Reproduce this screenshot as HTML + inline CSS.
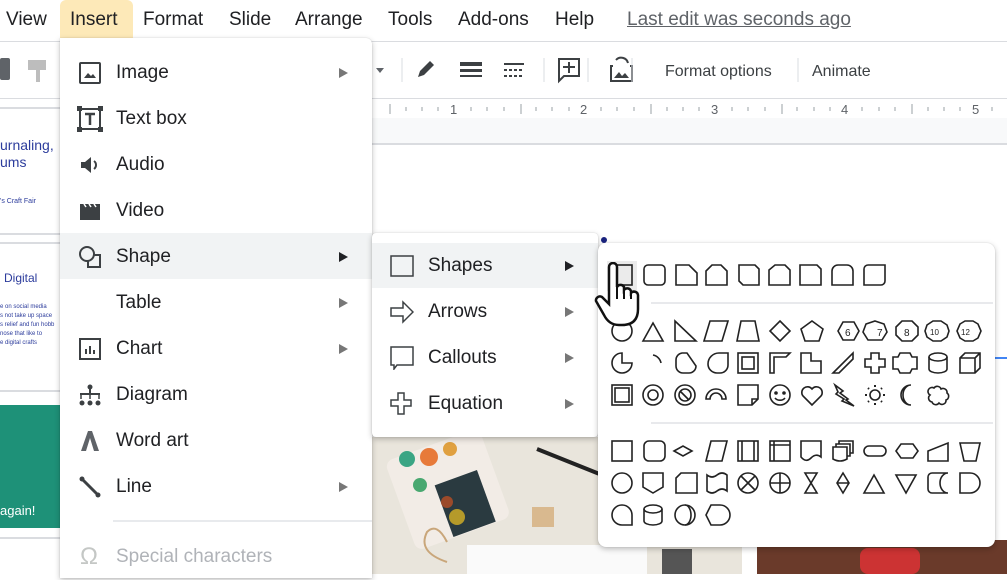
<!DOCTYPE html>
<html><head><meta charset="utf-8"><style>
*{margin:0;padding:0;box-sizing:border-box}
body{width:1007px;height:574px;overflow:hidden;background:#fff;font-family:"Liberation Sans",Arial,sans-serif;color:#202124;position:relative}
.abs{position:absolute}
.mb{top:0;height:40px;font-size:19px;line-height:40px;white-space:nowrap}
.menu{background:#fff;box-shadow:0 2px 6px rgba(0,0,0,.25),0 0 1px rgba(0,0,0,.2)}
.it{position:absolute;left:0;right:0;height:46px;font-size:19px;line-height:46px}
.it span.t{position:absolute;left:56px}
.arr{position:absolute;width:0;height:0;border-left:9px solid #555;border-top:5px solid transparent;border-bottom:5px solid transparent;top:18px}
.ic{position:absolute;left:18px;top:11px}
</style></head><body>
<div class="abs" style="left:60px;top:0;width:73px;height:38px;background:#fde9b8;border-radius:6px 6px 0 0"></div>
<div class="abs mb" style="left:6px">View</div>
<div class="abs mb" style="left:70px">Insert</div>
<div class="abs mb" style="left:143px">Format</div>
<div class="abs mb" style="left:229px">Slide</div>
<div class="abs mb" style="left:295px">Arrange</div>
<div class="abs mb" style="left:388px">Tools</div>
<div class="abs mb" style="left:458px">Add-ons</div>
<div class="abs mb" style="left:555px">Help</div>
<div class="abs mb" style="left:627px;color:#5f6368;text-decoration:underline">Last edit was seconds ago</div>
<div class="abs" style="left:0;top:41px;width:1007px;height:1px;background:#dadce0"></div>
<div class="abs" style="left:0;top:58px;width:10px;height:22px;background:#5f6368;border-radius:2px"></div>
<div class="abs" style="left:28px;top:60px;width:18px;height:10px;background:#bdbdbd"></div>
<div class="abs" style="left:36px;top:70px;width:4px;height:12px;background:#bdbdbd"></div>
<svg class="abs" style="left:372px;top:50px" width="635" height="40">
<path d="M4 18 l8 0 l-4 5z" fill="#5f6368"/>
<line x1="30" y1="8" x2="30" y2="32" stroke="#dadce0"/>
<path d="M46 27 l2-6 l10-10 l4 4 l-10 10z" fill="#3c4043"/>
<rect x="88" y="12" width="22" height="4" fill="#3c4043"/><rect x="88" y="19" width="22" height="3" fill="#3c4043"/><rect x="88" y="25" width="22" height="2" fill="#3c4043"/>
<rect x="132" y="13" width="20" height="2" fill="#3c4043"/><path d="M132 20h20M132 26h20" stroke="#3c4043" stroke-width="2" stroke-dasharray="3 2"/>
<line x1="172" y1="8" x2="172" y2="32" stroke="#dadce0"/>
<path d="M187 9h20v17h-15l-5 5z" fill="none" stroke="#3c4043" stroke-width="2"/><path d="M197 12v11M191 17h12" stroke="#3c4043" stroke-width="2"/>
<line x1="216" y1="8" x2="216" y2="32" stroke="#dadce0"/>
<path d="M241 16h-2v15h21v-15h-2M244 10a7 7 0 0 1 12 3" fill="none" stroke="#3c4043" stroke-width="2"/><path d="M242 28l5-6 3 4 3-3 4 5z" fill="#3c4043"/>
<line x1="260" y1="8" x2="260" y2="32" stroke="#dadce0"/>
<text x="293" y="26" font-size="16" fill="#3c4043" font-family="Liberation Sans">Format options</text>
<line x1="426" y1="8" x2="426" y2="32" stroke="#dadce0"/>
<text x="440" y="26" font-size="16" fill="#3c4043" font-family="Liberation Sans">Animate</text>
</svg>
<div class="abs" style="left:0;top:98px;width:1007px;height:1px;background:#dadce0"></div>
<svg class="abs" style="left:372px;top:99px" width="635" height="46">
<rect x="0" y="19" width="635" height="26" fill="#f8f9fa"/>
<line x1="0" y1="45" x2="635" y2="45" stroke="#dadce0" stroke-width="2"/>
<g fill="#5f6368" font-size="13" font-family="Liberation Sans">
<text x="78" y="15">1</text><text x="208" y="15">2</text><text x="339" y="15">3</text><text x="469" y="15">4</text><text x="600" y="15">5</text></g>
<g stroke="#9aa0a6"><path d="M18 5v10M149 5v10M279 5v10M410 5v10M540 5v10"/>
<path d="M34 8v4M50 8v4M66 8v4M99 8v4M115 8v4M132 8v4M164 8v4M180 8v4M197 8v4M229 8v4M245 8v4M262 8v4M295 8v4M311 8v4M327 8v4M360 8v4M376 8v4M393 8v4M425 8v4M442 8v4M458 8v4M490 8v4M507 8v4M523 8v4M556 8v4M572 8v4M588 8v4M620 8v4" /></g>
</svg>
<div class="abs" style="left:0;top:107px;width:60px;height:128px;background:#fff;border-top:2px solid #dadce0;border-bottom:2px solid #dadce0"></div>
<div class="abs" style="left:0;top:137px;font-size:14px;color:#2c3c9c;line-height:17px">urnaling,<br>ums</div>
<div class="abs" style="left:0;top:198px;font-size:7px;color:#2c3c9c">'s Craft Fair</div>
<div class="abs" style="left:0;top:242px;width:60px;height:150px;border-top:2px solid #dadce0;border-bottom:2px solid #dadce0"></div>
<div class="abs" style="left:4px;top:271px;font-size:12px;color:#2c3c9c">Digital</div>
<div class="abs" style="left:0;top:303px;font-size:6px;line-height:9px;color:#2c3c9c;white-space:nowrap">e on social media<br>s not take up space<br>s relief and fun hobb<br>nose that like to<br>e digital crafts</div>
<div class="abs" style="left:0;top:405px;width:60px;height:123px;background:#1e9178"></div>
<div class="abs" style="left:0;top:503px;font-size:13px;color:#fff">again!</div>
<div class="abs" style="left:0;top:537px;width:60px;height:2px;background:#dadce0"></div>
<div class="abs" style="left:372px;top:437px;width:370px;height:137px;background:#e9e5dc"></div>
<svg class="abs" style="left:372px;top:437px" width="370" height="137">
<rect x="25" y="5" width="100" height="95" rx="8" fill="#f2ece6" transform="rotate(-20 75 50)"/>
<circle cx="35" cy="22" r="8" fill="#3aa584"/><circle cx="57" cy="20" r="9" fill="#e77a3a"/><circle cx="78" cy="12" r="7" fill="#e0a040"/>
<circle cx="48" cy="48" r="7" fill="#49a870"/><rect x="70" y="40" width="45" height="55" fill="#2a3a40" transform="rotate(-20 90 65)"/>
<circle cx="85" cy="80" r="8" fill="#b59a2a"/><circle cx="75" cy="65" r="6" fill="#9b4a2a"/>
<path d="M165 12l80 32" stroke="#222" stroke-width="4"/>
<rect x="160" y="70" width="22" height="20" fill="#d9b98f"/>
<path d="M75 125 q-30 -10 -20 -30 q10 -10 20 10" fill="none" stroke="#c9a67a" stroke-width="2"/>
<rect x="95" y="108" width="180" height="40" fill="#fafafa"/>
<rect x="290" y="112" width="30" height="25" fill="#555"/>
</svg>
<div class="abs" style="left:757px;top:540px;width:250px;height:34px;background:#6a3a2a"></div>
<div class="abs" style="left:860px;top:548px;width:60px;height:26px;background:#c33;border-radius:8px"></div>
<div class="abs" style="left:995px;top:357px;width:12px;height:2px;background:#4285f4"></div>
<div class="abs" style="left:601px;top:237px;width:6px;height:6px;border-radius:3px;background:#1a237e"></div>

<div class="abs menu" style="left:60px;top:38px;width:312px;height:540px;border-radius:0 6px 0 0">
 <div class="it" style="top:12px"><svg class="ic" width="24" height="24"><rect x="2" y="2" width="20" height="20" rx="1" fill="none" stroke="#3c4043" stroke-width="2"/><path d="M6 17l4-5 3 3 2-2 3 4z" fill="#3c4043"/></svg><span class="t">Image</span><i class="arr" style="left:279px;border-left-color:#777"></i></div>
 <div class="it" style="top:58px"><svg class="ic" width="26" height="26" style="left:17px;top:10px"><rect x="3" y="3" width="20" height="20" fill="none" stroke="#3c4043" stroke-width="2"/><rect x="0" y="0" width="5" height="5" fill="#3c4043"/><rect x="21" y="0" width="5" height="5" fill="#3c4043"/><rect x="0" y="21" width="5" height="5" fill="#3c4043"/><rect x="21" y="21" width="5" height="5" fill="#3c4043"/><path d="M8 8h10M13 8v11" stroke="#3c4043" stroke-width="2.5"/></svg><span class="t">Text box</span></div>
 <div class="it" style="top:104px"><svg class="ic" width="24" height="24"><path d="M3 9h4l6-5v16l-6-5h-4z" fill="#3c4043"/><path d="M16 8a5 5 0 0 1 0 8" fill="none" stroke="#3c4043" stroke-width="2"/></svg><span class="t">Audio</span></div>
 <div class="it" style="top:150px"><svg class="ic" width="24" height="24"><path d="M2 5h20v16h-20z" fill="#3c4043"/><path d="M6 5l2 3M11 5l2 3M16 5l2 3" stroke="#fff" stroke-width="1.5"/></svg><span class="t">Video</span></div>
 <div class="it" style="top:195px;background:#f1f3f4;height:46px;line-height:48px"><svg class="ic" width="24" height="24" style="top:12px"><circle cx="9" cy="9" r="7" fill="none" stroke="#3c4043" stroke-width="2"/><path d="M16 10h6v12h-12v-6" fill="none" stroke="#3c4043" stroke-width="2"/></svg><span class="t">Shape</span><i class="arr" style="left:279px;top:19px;border-left-color:#202124"></i></div>
 <div class="it" style="top:242px"><span class="t">Table</span><i class="arr" style="left:279px;border-left-color:#777"></i></div>
 <div class="it" style="top:288px"><svg class="ic" width="24" height="24"><rect x="2" y="2" width="20" height="20" fill="none" stroke="#3c4043" stroke-width="2"/><path d="M8 17v-5M12 17v-8M16 17v-4" stroke="#3c4043" stroke-width="2"/></svg><span class="t">Chart</span><i class="arr" style="left:279px;border-left-color:#777"></i></div>
 <div class="it" style="top:334px"><svg class="ic" width="24" height="24"><circle cx="12" cy="4" r="2.5" fill="#3c4043"/><path d="M2 11h20M12 6v6" stroke="#3c4043" stroke-width="2"/><circle cx="4" cy="20" r="2.5" fill="#3c4043"/><circle cx="12" cy="20" r="2.5" fill="#3c4043"/><circle cx="20" cy="20" r="2.5" fill="#3c4043"/><path d="M3 11v5M21 11v5M12 11v5" stroke="#3c4043" stroke-width="1.5"/></svg><span class="t">Diagram</span></div>
 <div class="it" style="top:380px"><svg class="ic" width="24" height="24"><path d="M3 22l7-20h4l7 20h-5l-4-13-4 13z" fill="#5f6368"/></svg><span class="t">Word art</span></div>
 <div class="it" style="top:426px"><svg class="ic" width="24" height="24"><path d="M4 4l16 16" stroke="#3c4043" stroke-width="3"/><circle cx="4" cy="4" r="2.5" fill="#3c4043"/><circle cx="20" cy="20" r="2.5" fill="#3c4043"/></svg><span class="t">Line</span><i class="arr" style="left:279px;border-left-color:#777"></i></div>
 <div class="abs" style="left:53px;top:482px;width:259px;height:2px;background:#e8eaed"></div>
 <div class="it" style="top:496px;color:#b0b3b8"><span class="abs" style="left:20px;font-size:24px;color:#c4c7c5">Ω</span><span class="t">Special characters</span></div>
</div>

<div class="abs menu" style="left:372px;top:233px;width:226px;height:204px;border-radius:4px">
 <div class="it" style="top:10px;background:#f1f3f4;height:45px;line-height:46px"><svg class="ic" width="24" height="24"><rect x="1" y="2" width="22" height="20" fill="none" stroke="#3c4043" stroke-width="1.5"/></svg><span class="t">Shapes</span><i class="arr" style="left:193px;border-left-color:#202124"></i></div>
 <div class="it" style="top:56px"><svg class="ic" width="24" height="24"><path d="M1 8h12v-6l10 10-10 10v-6h-12z" fill="none" stroke="#3c4043" stroke-width="1.5"/></svg><span class="t">Arrows</span><i class="arr" style="left:193px;border-left-color:#777"></i></div>
 <div class="it" style="top:102px"><svg class="ic" width="24" height="24"><path d="M1 1h22v18h-16l-3 4v-4h-3z" fill="none" stroke="#3c4043" stroke-width="1.5"/></svg><span class="t">Callouts</span><i class="arr" style="left:193px;border-left-color:#777"></i></div>
 <div class="it" style="top:148px"><svg class="ic" width="24" height="24"><path d="M8 1h6v7h7v6h-7v8h-6v-8h-7v-6h7z" fill="none" stroke="#3c4043" stroke-width="1.5"/></svg><span class="t">Equation</span><i class="arr" style="left:193px;border-left-color:#777"></i></div>
</div>

<div class="abs menu" style="left:598px;top:243px;width:397px;height:304px;border-radius:8px"></div>
<div class="abs" style="left:607px;top:261px;width:30px;height:30px;background:#ebebeb"></div>
<svg class="abs" style="left:598px;top:243px" width="397" height="304" fill="none" stroke="#222" stroke-width="1.6" font-family="Liberation Sans">
<line x1="53" y1="60" x2="395" y2="60" stroke="#dadce0" stroke-width="1.2"/>
<line x1="53" y1="180" x2="395" y2="180" stroke="#dadce0" stroke-width="1.2"/>
<g transform="translate(0,22)">
<rect x="14" y="0" width="20" height="20"/>
<rect x="46" y="0" width="21" height="20" rx="4"/>
<path d="M78 0h13l8 8v12h-21z"/>
<path d="M115 0h-1l-6 6v14h21v-14l-6-6z"/>
<path d="M141 0h16l4 4v16h-16l-4-4z"/>
<path d="M177 0h10l5 5v15h-21v-15z"/>
<path d="M202 0h17l4 4v16h-21z"/>
<path d="M234 20v-14a6 6 0 0 1 6-6h9a6 6 0 0 1 6 6v14z"/>
<path d="M266 20v-16a4 4 0 0 1 4-4h17v16a4 4 0 0 1-4 4z"/>
</g>
<g transform="translate(0,78)">
<circle cx="24" cy="10" r="10"/>
<path d="M45 20l10-18 10 18z"/>
<path d="M77 0v20h21z"/>
<path d="M112 0h18l-6 20h-18z"/>
<path d="M143 0h14l4 20h-22z"/>
<path d="M182 0l10 10-10 10-10-10z"/>
<path d="M214 0l11 8-4 12h-14l-4-12z"/>
<path d="M240 10l5-9h11l5 9-5 9h-11z"/><text x="247" y="15" font-size="10" fill="#222" stroke="none">6</text>
<path d="M277 0l9 3 3 8-5 8h-14l-5-8 3-8z"/><text x="279" y="15" font-size="10" fill="#222" stroke="none">7</text>
<path d="M304 0h10l6 6v8l-6 6h-10l-6-6v-8z"/><text x="306" y="15" font-size="10" fill="#222" stroke="none">8</text>
<path d="M335 0h8l6 4 2 6-2 6-6 4h-8l-6-4-2-6 2-6z"/><text x="332" y="14" font-size="8" fill="#222" stroke="none">10</text>
<path d="M367 0h8l5 3 3 7-3 7-5 3h-8l-5-3-3-7 3-7z"/><text x="363" y="14" font-size="8" fill="#222" stroke="none">12</text>
</g>
<g transform="translate(0,110)">
<path d="M24 10h10a10 10 0 1 1-10-10z"/>
<path d="M55 2a10 10 0 0 1 8 8"/>
<path d="M84 0h5l9 13a7 7 0 0 1-7 7h-6a7 7 0 0 1-7-7v-6a7 7 0 0 1 6-7z"/>
<path d="M130 0v12a8 8 0 0 1-8 8h-3a9 9 0 0 1-9-9a11 11 0 0 1 11-11z"/>
<rect x="140" y="0" width="20" height="20"/><rect x="144" y="4" width="12" height="12"/>
<path d="M172 20v-20h20l-4 4h-12v16z"/>
<path d="M203 0h10v8h10v12h-20z"/>
<path d="M235 20l20-20v6l-14 14z"/>
<path d="M273 0h8v6h6v8h-6v6h-8v-6h-6v-8h6z"/>
<path d="M302 0h10l2 4h5v12h-5l-2 4h-10l-2-4h-5v-12h5z"/>
<ellipse cx="340" cy="4" rx="9" ry="4"/><path d="M331 4v12a9 4 0 0 0 18 0v-12"/>
<path d="M362 5l5-5h15v15l-5 5h-15zM362 5h15v15M377 5l5-5"/>
</g>
<g transform="translate(0,142)">
<rect x="14" y="0" width="20" height="20"/><rect x="17" y="3" width="14" height="14"/>
<circle cx="55" cy="10" r="10"/><circle cx="55" cy="10" r="5"/>
<circle cx="87" cy="10" r="10"/><circle cx="87" cy="10" r="6"/><path d="M82 6l9 9"/>
<path d="M108 14a10 10 0 0 1 20 0h-4a6 6 0 0 0-12 0z"/>
<path d="M140 0h20v14l-6 6h-14zM154 20v-6h6"/>
<circle cx="182" cy="10" r="10"/><circle cx="178" cy="8" r="1" fill="#222"/><circle cx="186" cy="8" r="1" fill="#222"/><path d="M177 13a6 5 0 0 0 10 0"/>
<path d="M214 20l-9-9a5 5 0 0 1 9-7a5 5 0 0 1 9 7z"/>
<path d="M237 0l8 6-3 2 8 6-2 1 8 6-12-5 2-2-8-5 2-2z"/>
<circle cx="277" cy="10" r="5"/><path d="M277 0v2M277 18v2M267 10h2M285 10h2M270 3l1 1M283 16l1 1M270 17l1-1M283 4l1-1" stroke-width="2"/>
<path d="M313 0a10 10 0 0 0 0 20a8 10 0 0 1 0-20z"/>
<path d="M336 3a4 4 0 0 1 7 1a4 4 0 0 1 6 4a4 4 0 0 1-1 7a4 4 0 0 1-7 3a4 4 0 0 1-7-1a4 4 0 0 1-2-7a4 4 0 0 1 4-7z"/>
</g>
<g transform="translate(0,198)">
<rect x="14" y="0" width="20" height="20"/>
<rect x="46" y="0" width="21" height="20" rx="5"/>
<path d="M76 10l9-5 9 5-9 5z"/>
<path d="M113 0h16l-5 20h-16z"/>
<rect x="140" y="0" width="20" height="20"/><path d="M144 0v20M156 0v20"/>
<rect x="172" y="0" width="20" height="20"/><path d="M172 4h20M176 0v20"/>
<path d="M203 0h20v16q-5-4-10 1t-10-1z"/>
<path d="M235 6h14v12q-7 4-14 0zM238 6v-3h14v12h-3M241 3v-3h14v12h-3"/>
<rect x="266" y="5" width="22" height="10" rx="5"/>
<path d="M298 10l5-7h12l5 7-5 7h-12z"/>
<path d="M330 20v-10l20-8v18z"/>
<path d="M362 2h20l-4 18h-12z"/>
</g>
<g transform="translate(0,230)">
<circle cx="24" cy="10" r="10"/>
<path d="M45 0h20v14l-10 6-10-6z"/>
<path d="M83 0h16v20h-21v-15z"/>
<path d="M109 2q5 4 10 0t10 0v16q-5-4-10 0t-10 0z"/>
<circle cx="150" cy="10" r="10"/><path d="M143 3l14 14M157 3l-14 14"/>
<circle cx="182" cy="10" r="10"/><path d="M182 0v20M172 10h20"/>
<path d="M207 0h12l-12 20h12z"/>
<path d="M245 0l6 10-6 10-6-10zM239 10h12"/>
<path d="M266 20l10-18 10 18z"/>
<path d="M298 2h20l-10 18z"/>
<path d="M334 0h16a8 10 0 0 0 0 20h-16a4 4 0 0 1-4-4v-12a4 4 0 0 1 4-4z"/>
<path d="M362 0h10a10 10 0 0 1 0 20h-10z"/>
</g>
<g transform="translate(0,262)">
<path d="M34 20h-10a10 10 0 1 1 10-10z"/>
<ellipse cx="55" cy="4" rx="9" ry="4"/><path d="M46 4v12a9 4 0 0 0 18 0v-12"/>
<circle cx="87" cy="10" r="10"/><path d="M87 0a6 10 0 0 1 0 20"/>
<path d="M113 0h9a9 9 0 0 1 0 20h-9l-5-10z"/>
</g>
</svg>
<svg class="abs" style="left:592px;top:262px" width="50" height="66">
<path d="M17 5a4 4 0 0 1 8 0v20a4 4 0 0 1 7 0v3a4 4 0 0 1 7 1v2a4 4 0 0 1 7 2v14q0 16-16 16h-3q-10 0-15-10l-8-14a4 4 0 0 1 6-4l7 7z" fill="#fff" stroke="#111" stroke-width="2.5"/>
<path d="M25 25v12M32 28v9M39 31v6" stroke="#111" stroke-width="2"/>
</svg>
</body></html>
